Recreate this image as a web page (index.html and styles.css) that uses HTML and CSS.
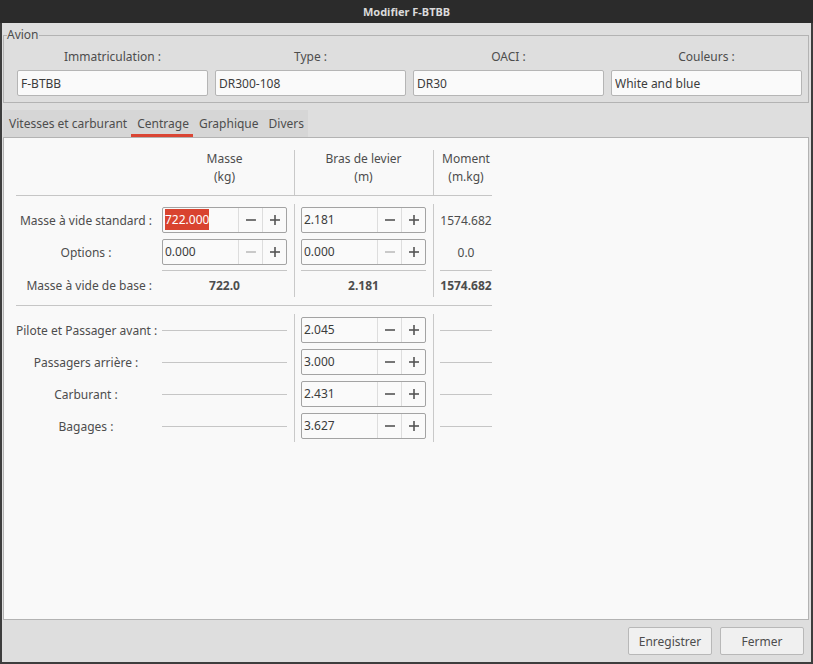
FILE: index.html
```html
<!DOCTYPE html>
<html lang="fr">
<head>
    <meta charset="UTF-8">
    <title>Modifier F-BTBB</title>
    <link rel="stylesheet" href="styles.css">
</head>
<body>
<div class="window">
    <div class="titlebar">Modifier F-BTBB</div>
    <div class="client">

        <fieldset class="group">
            <legend>Avion</legend>
            <div class="ident">
                <label for="immat">Immatriculation :</label>
                <label for="type">Type :</label>
                <label for="oaci">OACI :</label>
                <label for="couleurs">Couleurs :</label>
                <input id="immat" class="line-edit" value="F-BTBB">
                <input id="type" class="line-edit" value="DR300-108">
                <input id="oaci" class="line-edit" value="DR30">
                <input id="couleurs" class="line-edit" value="White and blue">
            </div>
        </fieldset>

        <div class="tabbar">
            <span class="tab">Vitesses et carburant</span>
            <span class="tab active">Centrage</span>
            <span class="tab">Graphique</span>
            <span class="tab">Divers</span>
        </div>

        <div class="pane">
            <div class="centrage">
                <div class="row head">
                    <span></span>
                    <span class="colhead">Masse<br>(kg)</span>
                    <span class="vsep"></span>
                    <span class="colhead">Bras de levier<br>(m)</span>
                    <span class="vsep"></span>
                    <span class="colhead">Moment<br>(m.kg)</span>
                </div>
                <div class="hrule"></div>

                <div class="row first">
                    <span class="rowlabel">Masse à vide standard :</span>
                    <div class="spin">
                        <span class="spin-text"><span class="selected">722.000</span></span>
                        <span class="spin-btn"><svg width="10" height="10"><line x1="0" y1="5" x2="10" y2="5"/></svg></span>
                        <span class="spin-btn"><svg width="10" height="10"><line x1="0" y1="5" x2="10" y2="5"/><line x1="5" y1="0" x2="5" y2="10"/></svg></span>
                    </div>
                    <span class="vsep"></span>
                    <div class="spin">
                        <span class="spin-text">2.181</span>
                        <span class="spin-btn"><svg width="10" height="10"><line x1="0" y1="5" x2="10" y2="5"/></svg></span>
                        <span class="spin-btn"><svg width="10" height="10"><line x1="0" y1="5" x2="10" y2="5"/><line x1="5" y1="0" x2="5" y2="10"/></svg></span>
                    </div>
                    <span class="vsep"></span>
                    <span class="value">1574.682</span>
                </div>

                <div class="row">
                    <span class="rowlabel">Options :</span>
                    <div class="spin">
                        <span class="spin-text">0.000</span>
                        <span class="spin-btn disabled"><svg width="10" height="10"><line x1="0" y1="5" x2="10" y2="5"/></svg></span>
                        <span class="spin-btn"><svg width="10" height="10"><line x1="0" y1="5" x2="10" y2="5"/><line x1="5" y1="0" x2="5" y2="10"/></svg></span>
                    </div>
                    <span class="vsep"></span>
                    <div class="spin">
                        <span class="spin-text">0.000</span>
                        <span class="spin-btn disabled"><svg width="10" height="10"><line x1="0" y1="5" x2="10" y2="5"/></svg></span>
                        <span class="spin-btn"><svg width="10" height="10"><line x1="0" y1="5" x2="10" y2="5"/><line x1="5" y1="0" x2="5" y2="10"/></svg></span>
                    </div>
                    <span class="vsep"></span>
                    <span class="value">0.0</span>
                </div>

                <div class="row sum-rule">
                    <span></span>
                    <span class="line"></span>
                    <span class="vsep"></span>
                    <span class="line"></span>
                    <span class="vsep"></span>
                    <span class="line"></span>
                </div>

                <div class="row total">
                    <span class="rowlabel right">Masse à vide de base :</span>
                    <span class="value bold">722.0</span>
                    <span class="vsep"></span>
                    <span class="value bold">2.181</span>
                    <span class="vsep"></span>
                    <span class="value bold">1574.682</span>
                </div>
                <div class="hrule"></div>

                <div class="row first">
                    <span class="rowlabel">Pilote et Passager avant :</span>
                    <span class="line"></span>
                    <span class="vsep"></span>
                    <div class="spin">
                        <span class="spin-text">2.045</span>
                        <span class="spin-btn"><svg width="10" height="10"><line x1="0" y1="5" x2="10" y2="5"/></svg></span>
                        <span class="spin-btn"><svg width="10" height="10"><line x1="0" y1="5" x2="10" y2="5"/><line x1="5" y1="0" x2="5" y2="10"/></svg></span>
                    </div>
                    <span class="vsep"></span>
                    <span class="line"></span>
                </div>

                <div class="row">
                    <span class="rowlabel">Passagers arrière :</span>
                    <span class="line"></span>
                    <span class="vsep"></span>
                    <div class="spin">
                        <span class="spin-text">3.000</span>
                        <span class="spin-btn"><svg width="10" height="10"><line x1="0" y1="5" x2="10" y2="5"/></svg></span>
                        <span class="spin-btn"><svg width="10" height="10"><line x1="0" y1="5" x2="10" y2="5"/><line x1="5" y1="0" x2="5" y2="10"/></svg></span>
                    </div>
                    <span class="vsep"></span>
                    <span class="line"></span>
                </div>

                <div class="row">
                    <span class="rowlabel">Carburant :</span>
                    <span class="line"></span>
                    <span class="vsep"></span>
                    <div class="spin">
                        <span class="spin-text">2.431</span>
                        <span class="spin-btn"><svg width="10" height="10"><line x1="0" y1="5" x2="10" y2="5"/></svg></span>
                        <span class="spin-btn"><svg width="10" height="10"><line x1="0" y1="5" x2="10" y2="5"/><line x1="5" y1="0" x2="5" y2="10"/></svg></span>
                    </div>
                    <span class="vsep"></span>
                    <span class="line"></span>
                </div>

                <div class="row">
                    <span class="rowlabel">Bagages :</span>
                    <span class="line"></span>
                    <span class="vsep"></span>
                    <div class="spin">
                        <span class="spin-text">3.627</span>
                        <span class="spin-btn"><svg width="10" height="10"><line x1="0" y1="5" x2="10" y2="5"/></svg></span>
                        <span class="spin-btn"><svg width="10" height="10"><line x1="0" y1="5" x2="10" y2="5"/><line x1="5" y1="0" x2="5" y2="10"/></svg></span>
                    </div>
                    <span class="vsep"></span>
                    <span class="line"></span>
                </div>
            </div>
        </div>

        <div class="buttons">
            <button class="btn">Enregistrer</button>
            <button class="btn">Fermer</button>
        </div>
    </div>
</div>
</body>
</html>
```

FILE: styles.css
```css
body {
    margin: 0;
    font-family: "Noto Sans", sans-serif;
    font-size: 12px;
    color: #4d4d4d;
    background: #dedede;
}

.window {
    width: 813px;
    height: 664px;
    box-sizing: border-box;
    display: flex;
    flex-direction: column;
    border: 2px solid #3d3d3d;
    border-top: 0;
    background: #dedede;
}

.titlebar {
    height: 23px;
    margin: 0 -2px;
    background: #2b2b2b;
    color: #dadada;
    font-size: 11px;
    font-weight: bold;
    line-height: 24px;
    text-align: center;
}

.client {
    flex: 1;
    display: flex;
    flex-direction: column;
    padding: 0 1px 0 1px;
}

/* ---- Avion group ---- */
.group {
    margin: 3px 1px 0 0;
    padding: 0;
    border: 1px solid #b3b3b3;
}

.group legend {
    margin-left: 3px;
    padding: 0;
    line-height: 18px;
}

.ident {
    display: grid;
    grid-template-columns: repeat(4, 191px);
    column-gap: 7px;
    row-gap: 4px;
    padding: 4px 4px 6px 13px;
}

.ident label {
    text-align: center;
    line-height: 18px;
}

.line-edit {
    height: 26px;
    box-sizing: border-box;
    border: 1px solid #b5b5b5;
    border-radius: 2px;
    background: #fafafa;
    padding: 0 3px;
    font: inherit;
    color: #3c3c3c;
}

/* ---- tabs ---- */
.tabbar {
    display: flex;
    align-self: flex-start;
    margin-top: 7px;
    height: 27px;
    background: #d6d6d6;
}

.tab {
    padding: 0 4px 0 6px;
    line-height: 27px;
    box-sizing: border-box;
}

.tab.active {
    box-shadow: inset 0 -3px 0 #da4534;
}

.pane {
    flex: 1;
    margin-right: 1px;
    border: 1px solid #b3b3b3;
    background: #f9f9f9;
    padding: 12px 12px 0 12px;
}

/* ---- centrage table ---- */
.centrage {
    width: 476px;
}

.row {
    display: grid;
    grid-template-columns: 146px 125px 14px 125px 14px 52px;
    align-items: center;
    height: 32px;
}

.row.head {
    height: 45px;
    align-items: start;
}

.row.first {
    height: 40px;
    padding-top: 8px;
    box-sizing: border-box;
}

.row.sum-rule {
    height: 5px;
}

.row.total {
    height: 32px;
    padding-bottom: 8px;
    box-sizing: border-box;
}

.colhead {
    text-align: center;
    line-height: 18px;
}

.vsep {
    align-self: stretch;
    background: linear-gradient(#c9c9c9, #c9c9c9) center / 1px 100% no-repeat;
}

.hrule {
    height: 1px;
    background: #c6c6c6;
}

.line {
    height: 1px;
    background: #c6c6c6;
}

.rowlabel {
    text-align: center;
    padding-right: 6px;
    white-space: nowrap;
}

.rowlabel.right {
    text-align: right;
    padding-right: 10px;
}

.value {
    text-align: center;
}

.bold {
    font-weight: bold;
}

.spin {
    display: flex;
    height: 26px;
    box-sizing: border-box;
    border: 1px solid #a3a3a3;
    border-radius: 2px;
    background: #fafafa;
}

.spin-text {
    flex: 1;
    padding-left: 2px;
    line-height: 24px;
    color: #3c3c3c;
}

.selected {
    background: #d9432f;
    color: #fff;
    padding: 2px 0;
}

.spin-btn {
    width: 24px;
    display: flex;
    align-items: center;
    justify-content: center;
    border-left: 1px solid #dddddd;
    box-sizing: border-box;
}

.spin-btn svg line {
    stroke: #555555;
    stroke-width: 1.6;
}

.spin-btn.disabled svg line {
    stroke: #bdbdbd;
}

/* ---- bottom buttons ---- */
.buttons {
    display: flex;
    justify-content: flex-end;
    gap: 8px;
    padding: 7px 6px 7px 0;
}

.btn {
    width: 84px;
    height: 28px;
    border: 1px solid #b8b8b8;
    border-radius: 2px;
    background: #f0f0f0;
    font: inherit;
    color: #4d4d4d;
}
```
